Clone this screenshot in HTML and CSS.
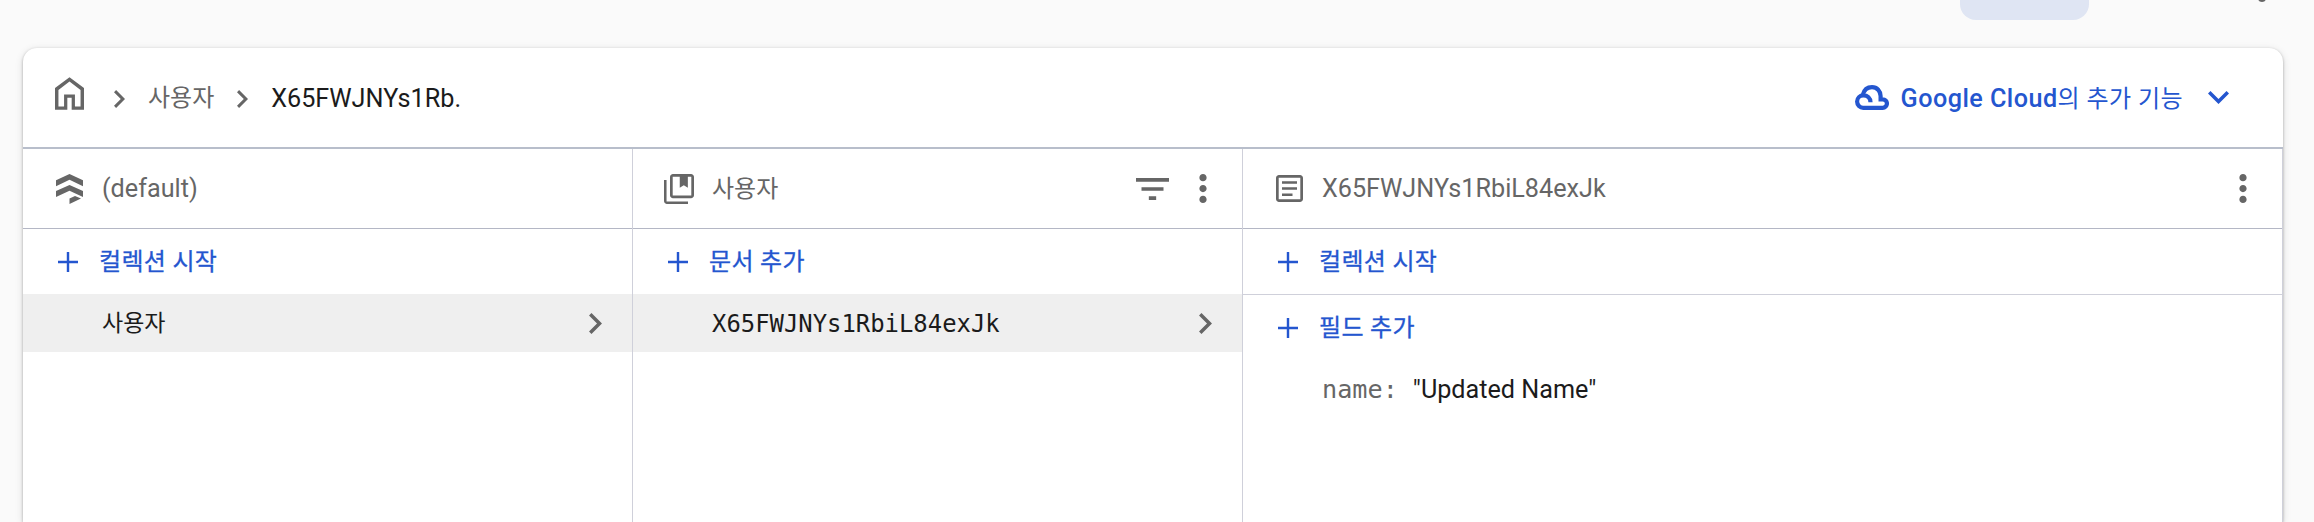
FILE: index.html
```html
<!DOCTYPE html>
<html lang="ko">
<head>
<meta charset="utf-8">
<title>Firestore</title>
<link rel="stylesheet" href="styles.css">
</head>
<body>
<svg class="defs" width="0" height="0">
  <symbol id="chev" viewBox="8.59 6 7.41 12"><path d="M10 6L8.59 7.41 13.17 12l-4.58 4.59L10 18l6-6z"/></symbol>
  <symbol id="more" viewBox="10 4 4 16"><path d="M12 8c1.1 0 2-.9 2-2s-.9-2-2-2-2 .9-2 2 .9 2 2 2zm0 2c-1.1 0-2 .9-2 2s.9 2 2 2 2-.9 2-2-.9-2-2-2zm0 6c-1.1 0-2 .9-2 2s.9 2 2 2 2-.9 2-2-.9-2-2-2z"/></symbol>
  <symbol id="add" viewBox="5 5 14 14"><path d="M19 12.85h-6.15V19h-1.7v-6.15H5v-1.7h6.15V5h1.7v6.15H19z"/></symbol>
</svg>
<div class="topbar">
  <div class="pill"></div>
  <div class="dot"></div>
</div>
<main class="card">
  <header class="crumbs">
    <svg class="home" viewBox="4 3 16 18"><path d="M5.900 19.200H9v-6.700h6v6.700h3.100V10L12 5.400 5.900 10zM4 21V9l8-6 8 6v12h-6.800v-6.600h-2.400V21z"/></svg>
    <svg class="sep sep-first"><use href="#chev"/></svg>
    <span class="crumb ko">사용자</span>
    <svg class="sep sep-second"><use href="#chev"/></svg>
    <span class="crumb current">X65FWJNYs1Rb.</span>
    <div class="cloud-menu">
      <svg class="cloud" viewBox="0 0 34 25"><path d="M7.800 9.800C9 5 12.500 2.100 17 2.100c5 0 8.600 4 8.600 9v3.200h2.100a4.250 4.250 0 0 1 0 8.500H8.300a6.200 6.200 0 0 1 0-12.400c4.200 0 7.200 2.600 7.200 6.800"/></svg>
      <span class="cloud-label">Google Cloud<span class="ko">의 추가 기능</span></span>
      <svg class="expand" viewBox="6 8.590 12 7.410"><path d="M16.590 8.590L12 13.170 7.410 8.590 6 10l6 6 6-6z"/></svg>
    </div>
  </header>
  <div class="panels">
    <section class="panel">
      <div class="head">
        <svg class="icon db" viewBox="0 0 27 30"><path d="M0 6.300 13.500 0 27 6.300v6L13.500 5.800 0 12.300zM0 17 13.500 11 27 17v6L13.500 16.700 0 23zM13.500 24.500l5.500-2.500 6 2.500L13.500 30z"/></svg>
        <span class="title">(default)</span>
      </div>
      <div class="add"><svg class="plus"><use href="#add"/></svg><span>컬렉션 시작</span></div>
      <div class="row"><span>사용자</span><svg class="go"><use href="#chev"/></svg></div>
    </section>
    <section class="panel">
      <div class="head">
        <svg class="icon coll" viewBox="2 2 20 20"><path d="M3.700 6H2v14c0 1.100.900 2 2 2h14v-1.700H3.700V6zM20 2H8c-1.100 0-2 .900-2 2v12.200c0 1.100.900 2 2 2h12c1.100 0 2-.900 2-2V4c0-1.100-.900-2-2-2zm.2 14.400H7.800V3.800h4.700v7.400l2.700-1.700 2.700 1.700V3.800h2.300z"/></svg>
        <span class="title ko">사용자</span>
        <svg class="filter" viewBox="3 6 18 12"><path d="M10 18h4v-2h-4v2zM3 6v2h18V6H3zm3 7h12v-2H6v2z"/></svg>
        <svg class="more"><use href="#more"/></svg>
      </div>
      <div class="add"><svg class="plus"><use href="#add"/></svg><span>문서 추가</span></div>
      <div class="row mono"><span>X65FWJNYs1RbiL84exJk</span><svg class="go"><use href="#chev"/></svg></div>
    </section>
    <section class="panel">
      <div class="head">
        <svg class="icon doc" viewBox="3 3 18 18"><path d="M19.200 4.800v14.400H4.800V4.800h14.400M19 3H5c-1.100 0-2 .900-2 2v14c0 1.100.900 2 2 2h14c1.100 0 2-.900 2-2V5c0-1.100-.900-2-2-2zM14 17H7v-1.700h7V17zm3-4.100H7v-1.700h10v1.700zm0-4H7V7.200h10v1.700z"/></svg>
        <span class="title">X65FWJNYs1RbiL84exJk</span>
        <svg class="more"><use href="#more"/></svg>
      </div>
      <div class="add bordered"><svg class="plus"><use href="#add"/></svg><span>컬렉션 시작</span></div>
      <div class="add"><svg class="plus"><use href="#add"/></svg><span>필드 추가</span></div>
      <div class="field"><span class="key">name:</span><span class="value">"Updated Name"</span></div>
    </section>
  </div>
</main>
</body>
</html>
```

FILE: styles.css
```css
* { box-sizing: border-box; }
body {
  margin: 0;
  height: 522px;
  overflow: hidden;
  display: flex;
  flex-direction: column;
  background: #fafafa;
  font: 25.2px/32px Roboto, "Noto Sans CJK KR", sans-serif;
  color: #1b1b1b;
  white-space: nowrap;
}
.defs { position: absolute; }
svg { flex: none; fill: currentColor; display: block; }
.topbar { flex: none; height: 48px; display: flex; padding-left: 1960px; }
.pill { width: 129px; height: 20px; border-radius: 0 0 16px 16px; background: #dfe5f3; }
.dot { width: 8px; height: 8px; margin: -6px 0 0 169px; border-radius: 50%; background: #666; }
.card {
  flex: none;
  width: 2260px;
  height: 474px;
  margin-left: 23px;
  border-radius: 14px 14px 0 0;
  background: #fff;
  box-shadow: 0 1px 3px rgba(0,0,0,.28), 0 2px 8px rgba(0,0,0,.12);
}
.ko { font-size: 24px; font-weight: 400; }
.crumbs { height: 101px; display: flex; align-items: center; padding-left: 32px; border-bottom: 2px solid #b8becb; color: #666; }
.home { width: 29px; height: 33px; margin-top: -8px; }
.sep { width: 11px; height: 18px; margin-top: 3px; }
.sep-first { margin-left: 30px; }
.crumb { margin-left: 23px; }
.sep-second { margin-left: 23px; }
.current { color: #1b1b1b; margin-top: 3px; }
.cloud-menu { margin-left: auto; margin-right: 54px; display: flex; align-items: center; color: #2456cf; font-weight: 500; letter-spacing: .45px; }
.cloud { width: 34px; height: 25px; fill: none; stroke: currentColor; stroke-width: 4.2px; }
.cloud-label { margin-left: 12px; margin-top: 2px; }
.expand { width: 21px; height: 13px; margin-left: 25px; }
.panels { display: grid; grid-template-columns: 610px 610px 1fr; height: 373px; }
.panel { border-right: 1px solid #cfd0da; }
.head { height: 80px; display: flex; align-items: center; padding: 0 35px 0 31px; border-bottom: 1px solid #b4b7c5; color: #666; }
.icon.db { width: 27px; height: 30px; margin-left: 2px; }
.icon.coll { width: 30px; height: 30px; }
.icon.doc { width: 27px; height: 27px; margin-left: 2px; }
.title { margin-left: 19px; margin-right: auto; }
.title.ko { margin-left: 18px; }
.filter { width: 33px; height: 22px; }
.more { width: 8px; height: 29px; margin-left: 30px; }
.add { height: 65px; display: flex; align-items: center; padding-left: 35px; color: #2456cf; font-size: 24px; letter-spacing: .3px; }
.add span { -webkit-text-stroke: .3px currentColor; }
.bordered { height: 66px; border-bottom: 1px solid #cfd0da; }
.plus { width: 20px; height: 20px; margin-right: 21px; }
.row { height: 58px; display: flex; align-items: center; justify-content: space-between; padding: 0 30px 0 79px; background: #efefef; font-size: 23px; }
.row span { margin-top: 1px; }
.go { width: 13px; height: 21px; color: #666; }
.mono, .key { font-family: "DejaVu Sans Mono", monospace; }
.mono { font-size: 23.9px; }
.field { display: flex; align-items: center; padding: 14px 0 0 79px; }
.key { color: #666; margin-right: 15px; }
```
